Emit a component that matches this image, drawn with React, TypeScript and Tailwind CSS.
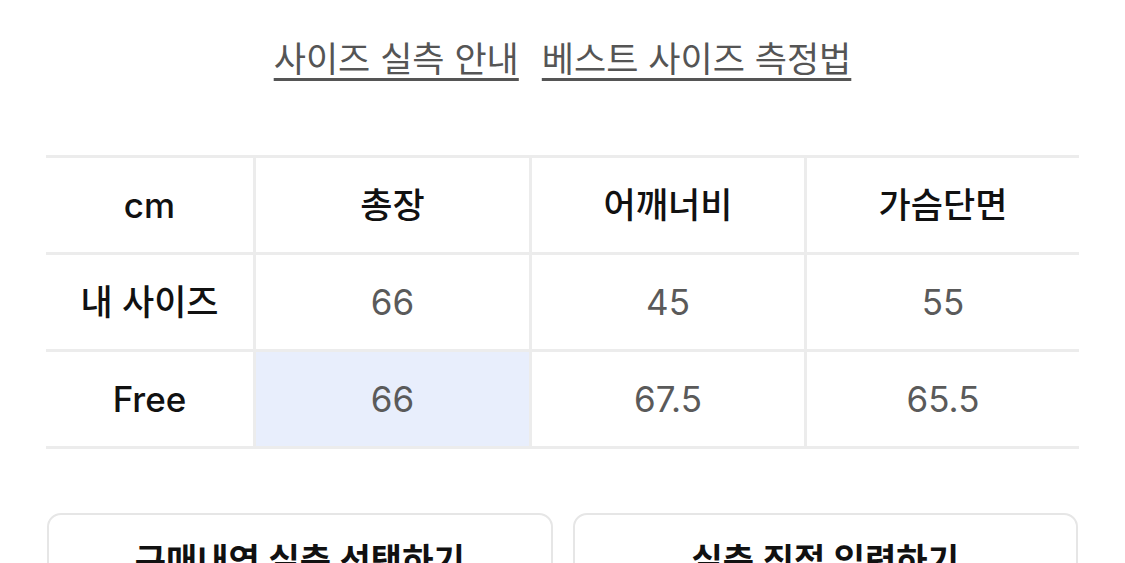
const font = "font-['Inter','Noto_Sans_CJK_KR',sans-serif]";

const headers = ["총장", "어깨너비", "가슴단면"];

const rows = [
  { label: "내 사이즈", values: ["66", "45", "55"], highlight: -1 },
  { label: "Free", values: ["66", "67.5", "65.5"], highlight: 0 },
];

function Cell({
  children,
  first,
  highlight,
  dark,
}: {
  children: React.ReactNode;
  first?: boolean;
  highlight?: boolean;
  dark?: boolean;
}) {
  return (
    <div
      className={[
        "flex h-[94px] items-center justify-center text-[35px]",
        first ? "" : "border-l-[3px] border-[#ececec]",
        highlight ? "bg-[#e8eefc]" : "bg-white",
        dark ? "font-medium text-[#111]" : "text-[#5a5a5a]",
      ].join(" ")}
    >
      {children}
    </div>
  );
}

export default function App() {
  return (
    <div className={`h-[563px] w-full overflow-hidden bg-white ${font}`}>
      <div className="flex justify-center gap-[23px] pt-[36px]">
        <span className="text-[35px] leading-[46px] text-[#555] underline decoration-[3px] underline-offset-[6px]">
          사이즈 실측 안내
        </span>
        <span className="text-[35px] leading-[46px] text-[#555] underline decoration-[3px] underline-offset-[6px]">
          베스트 사이즈 측정법
        </span>
      </div>

      <div className="mx-[46px] mt-[73px] border-b-[3px] border-[#ececec]">
        <div className="grid grid-cols-[207px_276px_275px_1fr] border-t-[3px] border-[#ececec]">
          <Cell first dark>
            cm
          </Cell>
          {headers.map((h) => (
            <Cell key={h} dark>
              {h}
            </Cell>
          ))}
        </div>
        {rows.map((r) => (
          <div
            key={r.label}
            className="grid grid-cols-[207px_276px_275px_1fr] border-t-[3px] border-[#ececec]"
          >
            <Cell first dark>
              {r.label}
            </Cell>
            {r.values.map((v, i) => (
              <Cell key={i} highlight={i === r.highlight}>
                {v}
              </Cell>
            ))}
          </div>
        ))}
      </div>

      <div className="mx-[47px] mt-[64px] grid grid-cols-2 gap-[20px]">
        <button className="flex h-[100px] items-start justify-center rounded-[14px] border-2 border-[#e6e6e6] pt-[23px] text-[34px] leading-[46px] font-semibold text-[#111]">
          구매내역 실측 선택하기
        </button>
        <button className="flex h-[100px] items-start justify-center rounded-[14px] border-2 border-[#e6e6e6] pt-[23px] text-[34px] leading-[46px] font-semibold text-[#111]">
          실측 직접 입력하기
        </button>
      </div>
    </div>
  );
}
